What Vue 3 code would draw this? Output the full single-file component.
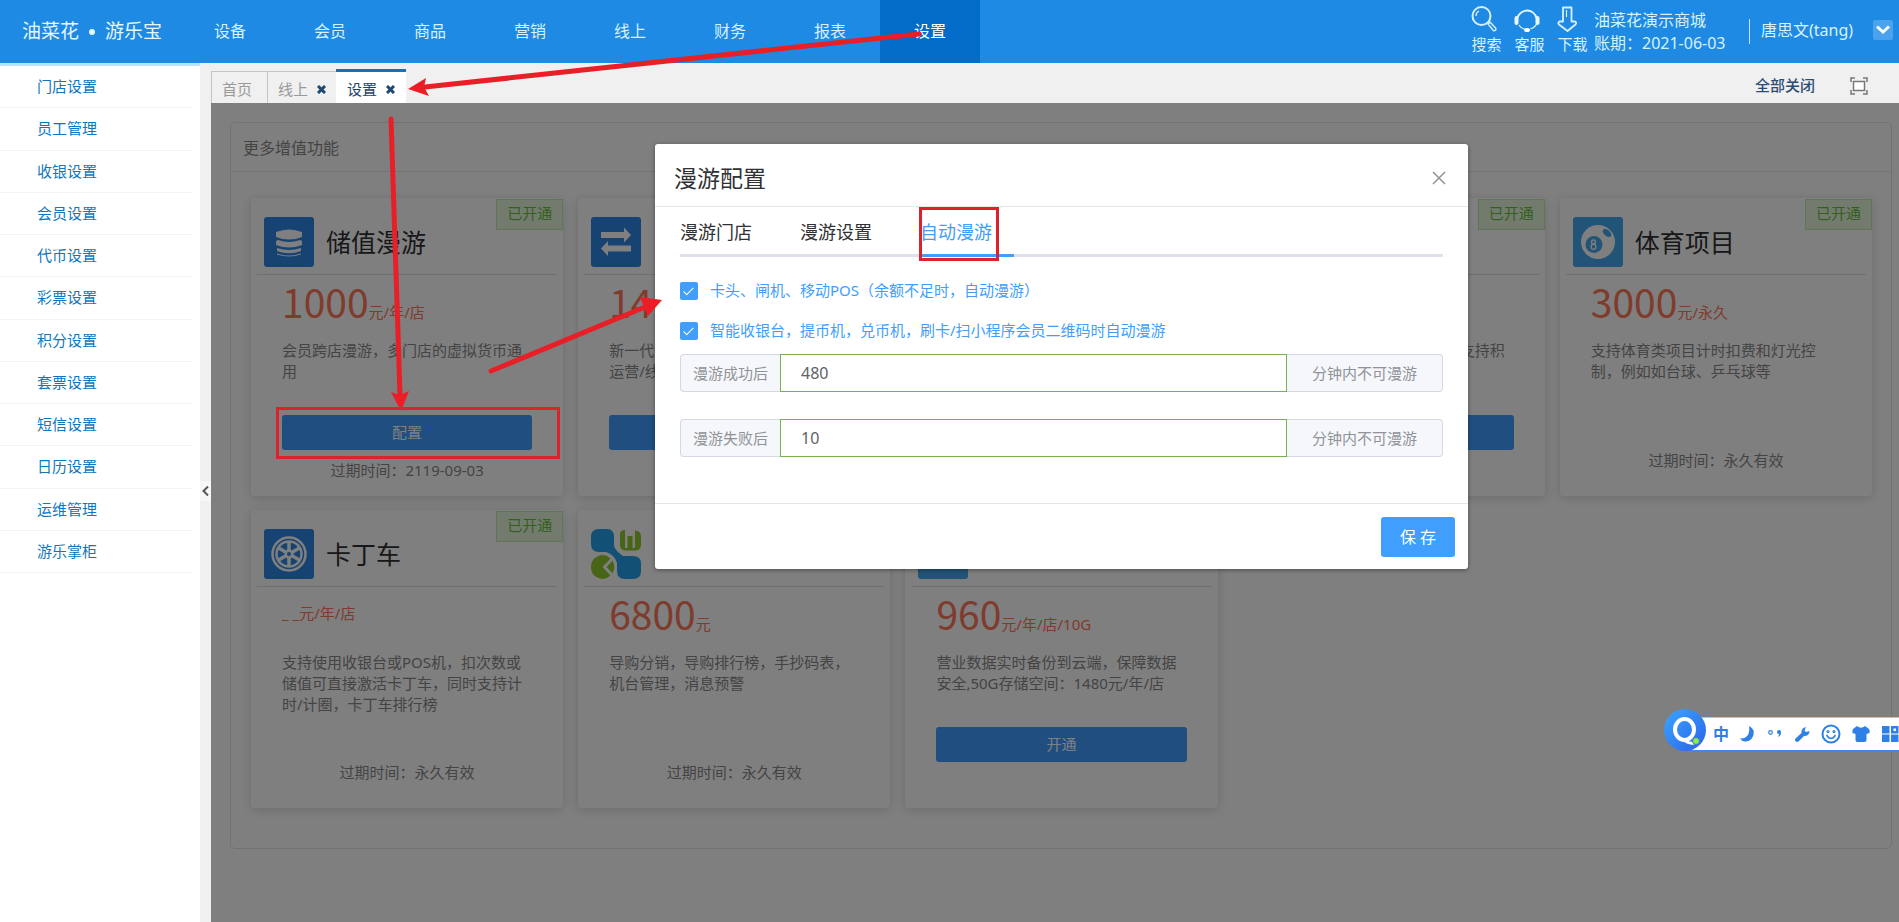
<script setup>
import { ref } from 'vue'

const navItems = ['设备', '会员', '商品', '营销', '线上', '财务', '报表', '设置']
const sideItems = [
  '门店设置', '员工管理', '收银设置', '会员设置', '代币设置', '彩票设置',
  '积分设置', '套票设置', '短信设置', '日历设置', '运维管理', '游乐掌柜'
]
const pageTabs = [
  { name: '首页', closable: false },
  { name: '线上', closable: true },
  { name: '设置', closable: true }
]
const cards = [
  { icon: 'coins', title: '储值漫游', opened: true, price: '1000', unit: '元/年/店', desc: '会员跨店漫游，多门店的虚拟货币通用', button: true, action: '配置', expire: '2119-09-03' },
  { icon: 'swap', price: '14', desc: '新一代\n运营/线', button: true },
  { icon: 'plain', button: true },
  { icon: 'plain', opened: true, desc: '支持积', descEnd: true, button: true },
  { icon: 'ball', title: '体育项目', opened: true, price: '3000', unit: '元/永久', desc: '支持体育类项目计时扣费和灯光控制，例如如台球、乒乓球等', expire: '永久有效' },
  { icon: 'wheel', title: '卡丁车', opened: true, unit: '_ _元/年/店', desc: '支持使用收银台或POS机，扣次数或储值可直接激活卡丁车，同时支持计时/计圈，卡丁车排行榜', expire: '永久有效' },
  { icon: 'clover', price: '6800', unit: '元', desc: '导购分销，导购排行榜，手抄码表，机台管理，消息预警', expire: '永久有效' },
  { icon: 'plain', price: '960', unit: '元/年/店/10G', desc: '营业数据实时备份到云端，保障数据安全,50G存储空间：1480元/年/店', button: true, action: '开通' }
]
const dialogTabs = ['漫游门店', '漫游设置', '自动漫游']
const activeTab = ref('自动漫游')
const autoDevice = ref(true)
const autoCashier = ref(true)
const afterSuccess = ref('480')
const afterFail = ref('10')
</script>

<template>
  <div class="app">
    <header class="top">
      <h1 class="logo">油菜花<i></i>游乐宝</h1>
      <nav class="nav">
        <a v-for="n in navItems" :key="n" href="#" :class="{ on: n === '设置' }">{{ n }}</a>
      </nav>
      <div class="tools">
        <button class="tool">
          <svg width="28" height="28" viewBox="0 0 28 28" fill="none" stroke="#d6f0ff" stroke-width="2">
            <circle cx="10.500" cy="11" r="9" /><path d="M5 11a5.500 5.500 0 0 1 3-5" stroke-width="1.300" />
            <path d="M17 19l2-2 5.500 6a1.600 1.600 0 0 1-2.400 2.200z" stroke-width="1.400" />
          </svg>
          搜索
        </button>
        <button class="tool">
          <svg width="28" height="28" viewBox="0 0 28 28" fill="none" stroke="#e8f7ff" stroke-width="2">
            <path d="M3.500 13a9.800 9.800 0 0 1 19 0" />
            <path d="M2.500 13v5M23.500 13v5" stroke-width="4" stroke-linecap="round" />
            <path d="M5 20q3 4.500 8 4.500M22.500 19q-1 3-6 5" stroke-width="1.200" />
            <ellipse cx="13" cy="25" rx="3" ry="2" fill="#fff" stroke="none" />
          </svg>
          客服
        </button>
        <button class="tool">
          <svg width="28" height="28" viewBox="0 0 28 28" fill="none" stroke="#d6f0ff" stroke-width="1.800" stroke-linejoin="round">
            <path d="M6 2.500h8.500v14h3.500q2 1 .5 3L10.500 26 2 19.500q-1.500-2 .5-3H6z" /><path d="M9.500 5v7" stroke-width="1.200" />
          </svg>
          下载
        </button>
      </div>
      <div class="shop">
        <span>油菜花演示商城</span>
        <span>账期：2021-06-03</span>
      </div>
      <span class="user">唐思文(tang)</span>
      <button class="drop" aria-label="展开">
        <svg width="14" height="10" viewBox="0 0 14 10" fill="none" stroke="#fff" stroke-width="3"><path d="M1 1.500l6 5.500 6-5.500" /></svg>
      </button>
    </header>

    <div class="body">
      <aside class="side">
        <nav class="menu">
          <a v-for="s in sideItems" :key="s" href="#">{{ s }}</a>
        </nav>
      </aside>
      <div class="split">
        <button aria-label="收起">
          <svg width="7" height="10" viewBox="0 0 7 10" fill="none" stroke="#555" stroke-width="2"><path d="M6 .5L1.500 5 6 9.500" /></svg>
        </button>
      </div>

      <div class="work">
        <div class="tabs">
          <div v-for="t in pageTabs" :key="t.name" class="tab" :class="{ on: t.name === '设置' }">
            <a href="#">{{ t.name }}</a>
            <button v-if="t.closable" aria-label="关闭">
              <svg width="9" height="9" viewBox="0 0 9 9" stroke="#1c4a72" stroke-width="3"><path d="M1 1l7 7M8 1L1 8" /></svg>
            </button>
          </div>
          <button class="closeall">全部关闭</button>
          <button class="full" aria-label="全屏">
            <svg width="18" height="18" viewBox="0 0 18 18" fill="none" stroke="#777" stroke-width="1.500">
              <path d="M1 5V1h4M13 1h4v4M17 13v4h-4M5 17H1v-4" /><rect x="3.500" y="4.500" width="11" height="9" fill="#fff" />
            </svg>
          </button>
        </div>

        <main class="main">
          <section class="panel">
            <h2>更多增值功能</h2>
            <div class="grid">
              <article v-for="(c, i) in cards" :key="i" class="card">
                <span v-if="c.opened" class="badge">已开通</span>
                <div class="head">
                  <svg v-if="c.icon === 'coins'" width="50" height="50" viewBox="0 0 50 50">
                    <rect width="50" height="50" rx="3" fill="#2f86e4" />
                    <g fill="#fff">
                      <path d="M12 15q13-5 26 0v5q-13 5-26 0z" /><path d="M14 23q11 4 22 0l2 1v4q-13 5-26 0v-4z" />
                      <path d="M13 31q12 4 24 0v3q-12 4.500-24 0z" /><path d="M13 36.500q12 4 24 0v1q-12 4-24 0z" />
                    </g>
                  </svg>
                  <svg v-else-if="c.icon === 'swap'" width="50" height="50" viewBox="0 0 50 50">
                    <rect width="50" height="50" rx="3" fill="#2f86e4" />
                    <path d="M10 15h23v-4.500l7 7.500-7 7.500V21H10zM40 28.500H17V24l-7 7.500 7 7.500v-4.500h23z" fill="#fff" />
                  </svg>
                  <svg v-else-if="c.icon === 'ball'" width="50" height="50" viewBox="0 0 50 50">
                    <rect width="50" height="50" rx="3" fill="#45a8ee" />
                    <circle cx="25" cy="25" r="17" fill="#fff" /><ellipse cx="34" cy="16" rx="5" ry="3" fill="#45a8ee" transform="rotate(40 34 16)" />
                    <circle cx="21" cy="27.500" r="8.500" fill="#45a8ee" />
                    <g fill="none" stroke="#fff" stroke-width="1.300"><ellipse cx="20.500" cy="25" rx="1.900" ry="2.100" /><ellipse cx="20.500" cy="29.700" rx="2.300" ry="2.600" /></g>
                  </svg>
                  <svg v-else-if="c.icon === 'wheel'" width="50" height="50" viewBox="0 0 50 50">
                    <rect width="50" height="50" rx="3" fill="#2f86e4" />
                    <g fill="none" stroke="#fff">
                      <circle cx="25" cy="25" r="16.500" stroke-width="2.500" /><circle cx="25" cy="25" r="12.500" stroke-width="2.500" />
                      <path d="M25 13v24M14.600 19l20.800 12M35.400 19L14.600 31" stroke-width="3.500" />
                    </g>
                    <circle cx="25" cy="25" r="4.500" fill="#fff" /><circle cx="25" cy="25" r="2" fill="#2f86e4" />
                  </svg>
                  <svg v-else-if="c.icon === 'clover'" width="50" height="50" viewBox="0 0 50 50">
                    <path d="M8 0h8q7 0 7 8v8q0 3 3 6t6 5h10q8 0 8 8v7q0 8-8 8h-8q-8 0-8-8v-8q-1-4-4-7t-7-4H8q-8 0-8-8V8q0-8 8-8z" fill="#24a0ea" />
                    <path d="M29 5q0-4 5-4v18h2.500V7h5v12H44V1.500q6 0 6 6v8q0 6-6 6h-9q-6 0-6-6z" fill="#90c82e" />
                    <path d="M0 38a11.500 11.500 0 0 1 19.500-8.500L11.500 38l8 8.500A11.500 11.500 0 0 1 0 38zM21.500 31.500q3.500 6.500 0 13l-6-6.500z" fill="#90c82e" />
                  </svg>
                  <svg v-else width="50" height="50" viewBox="0 0 50 50"><rect width="50" height="50" rx="3" fill="#45a8ee" /></svg>
                  <h3 v-if="c.title">{{ c.title }}</h3>
                </div>
                <p class="price"><span><b v-if="c.price">{{ c.price }}</b>{{ c.unit }}</span></p>
                <p class="desc" :class="{ end: c.descEnd }">{{ c.desc }}</p>
                <button v-if="c.button" class="act" :aria-label="c.action || '配置'">{{ c.action }}</button>
                <div v-else class="noact"></div>
                <p v-if="c.expire" class="expire">过期时间：{{ c.expire }}</p>
              </article>
            </div>
          </section>

          <div class="mask">
            <div class="dialog" role="dialog" aria-labelledby="dlg-title">
              <div class="dhead">
                <h2 id="dlg-title">漫游配置</h2>
                <button aria-label="关闭">
                  <svg width="14" height="14" viewBox="0 0 14 14" stroke="#909399" stroke-width="1.500"><path d="M1 1l12 12M13 1L1 13" /></svg>
                </button>
              </div>
              <div class="dbody">
                <div class="dtabs">
                  <button v-for="t in dialogTabs" :key="t" :class="{ on: t === activeTab }" @click="activeTab = t">{{ t }}</button>
                </div>
                <label class="check"><input v-model="autoDevice" type="checkbox" />卡头、闸机、移动POS（余额不足时，自动漫游）</label>
                <label class="check"><input v-model="autoCashier" type="checkbox" />智能收银台，提币机，兑币机，刷卡/扫小程序会员二维码时自动漫游</label>
                <div class="field">
                  <label for="ok-after">漫游成功后</label>
                  <input id="ok-after" v-model="afterSuccess" type="text" />
                  <span>分钟内不可漫游</span>
                </div>
                <div class="field">
                  <label for="fail-after">漫游失败后</label>
                  <input id="fail-after" v-model="afterFail" type="text" />
                  <span>分钟内不可漫游</span>
                </div>
              </div>
              <div class="dfoot"><button>保 存</button></div>
            </div>
          </div>
        </main>
      </div>
    </div>

    <div class="ime">
      <svg class="q" width="42" height="42" viewBox="0 0 42 42">
        <defs><linearGradient id="qg" x1="0" y1="0" x2="1" y2="1"><stop offset="0" stop-color="#3aa6ff" /><stop offset="1" stop-color="#2c62ea" /></linearGradient></defs>
        <circle cx="21" cy="21" r="21" fill="url(#qg)" />
        <ellipse cx="20.500" cy="20.500" rx="9.500" ry="10.500" fill="none" stroke="#fff" stroke-width="4" />
        <path d="M19 30q5 5 11 4" fill="none" stroke="#fff" stroke-width="3" />
        <circle cx="32" cy="32" r="3.500" fill="#8ff03a" stroke="#2c72ea" stroke-width="1" />
      </svg>
      <b>中</b>
      <svg width="16" height="16" viewBox="0 0 16 16" fill="#2f80e6"><path d="M9 0q6 3 4.500 9Q11 16 5 15.500 1.500 15 0 12.500q5 .5 7.500-3T9 0z" /></svg>
      <svg width="16" height="16" viewBox="0 0 16 16" fill="#2f80e6"><circle cx="3.500" cy="6.500" r="1.800" fill="none" stroke="#2f80e6" stroke-width="1.200" /><circle cx="12" cy="6" r="2" /><path d="M14 6q0 4-3 5l1.500-4z" /></svg>
      <svg width="16" height="16" viewBox="0 0 16 16" fill="#2f80e6"><path d="M1.500 12.500l6-5.500Q7 2 12 1l-1.500 3.500L12 6l3.500-1Q15.500 10 10 10l-5.500 5.500q-2 1-3-.5t0-2.500z" /></svg>
      <svg width="20" height="20" viewBox="0 0 20 20" fill="none" stroke="#2f80e6" stroke-width="2"><circle cx="10" cy="10" r="8.500" /><path d="M5.500 11q4.500 7 9 0" stroke-width="1.500" /><circle cx="7" cy="7.500" r=".6" /><circle cx="13" cy="7.500" r=".6" /></svg>
      <svg width="18" height="18" viewBox="0 0 18 18" fill="#2f80e6"><path d="M5 1q4 3.500 8 0l4 3q1 2 .5 4l-3 1v6q0 2-2 2h-7q-2 0-2-2V9l-3-1q-.5-2 .5-4z" /></svg>
      <svg width="18" height="18" viewBox="0 0 18 18" fill="#2f80e6"><path d="M1 1h7.500v7.500H1zM1 9.500h7.500V17H1zM10 9.500h7.500V17H10zM10 1h7.500v7.500H10z" /><rect x="12.500" y="3.500" width="2.500" height="2.500" fill="#fff" /></svg>
    </div>

    <svg class="marks" width="1899" height="922" viewBox="0 0 1899 922" fill="none" stroke="#e91f28">
      <g stroke-width="5" stroke-linecap="round">
        <path d="M919 34L425 87" /><path d="M391 119L400 395" /><path d="M491 371L645 307" />
      </g>
      <g fill="#ee1c25" stroke="none">
        <path d="M408 89L426 78l-2 9 5 9z" /><path d="M401 411L391 392l9 3 9-4z" /><path d="M662 300L640 297l4 10 4 9z" />
      </g>
      <g stroke="#dc222b" stroke-width="3">
        <rect x="920.500" y="208.500" width="77" height="51" /><rect x="277.500" y="408.500" width="281" height="49" />
      </g>
    </svg>
  </div>
</template>

<style>
html, body { margin: 0; background: #fff; }
</style>

<style scoped>
.app {
  position: relative; display: flex; flex-direction: column; min-height: 100vh; overflow: hidden;
  font-family: "Noto Sans", "Noto Sans CJK SC", sans-serif; font-size: 15px; line-height: 21px; color: #888;
}
.app *, .app *::before { box-sizing: border-box; }
a { text-decoration: none; color: inherit; }
button { font: inherit; border: 0; padding: 0; background: none; color: inherit; cursor: pointer; }
h1, h2, h3, p { margin: 0; font-weight: 400; }
svg { display: block; flex: none; }

.top { display: flex; align-items: center; height: 63px; background: #1e8ae3; color: #d8f1ff; font-size: 16px; }
.logo { display: flex; align-items: center; width: 180px; padding-left: 22px; font-size: 19px; color: #e6f6ff; }
.logo i { width: 6px; height: 6px; border-radius: 3px; background: #e6f6ff; margin: 0 10px; }
.nav { display: flex; align-self: stretch; }
.nav a { width: 100px; line-height: 63px; text-align: center; }
.nav a.on { background: #036bc8; color: #fff; }
.tools { display: flex; gap: 12px; margin-left: auto; font-size: 15px; }
.tool { display: flex; flex-direction: column; gap: 1px; width: 31px; padding-bottom: 3px; white-space: nowrap; }
.shop { display: flex; flex-direction: column; margin-left: 6px; width: 155px; line-height: 23px; white-space: nowrap; }
.user { padding: 1px 0 3px 11px; width: 124px; border-left: 1px solid #c8e8ff; white-space: nowrap; }
.drop { display: flex; align-items: center; justify-content: center; width: 20px; height: 20px; margin: 0 6px 4px 0; background: #4ba3ee; border-radius: 2px; }

.body { display: flex; flex: 1; }
.side { width: 200px; border-top: 3px solid #b9e4fd; background: #fff; border-bottom: 1px solid #e8e8e8; }
.menu { display: grid; grid-auto-rows: 1fr; height: 507px; margin-right: 9px; }
.menu a { display: flex; align-items: center; padding-left: 37px; border-bottom: 1px solid #f3f3f3; color: #0d78c0; }
.split { display: flex; align-items: center; width: 11px; padding-bottom: 4px; background: #f0f0f0; }
.split button { display: flex; align-items: center; justify-content: center; width: 11px; height: 20px; background: #f7f7f7; }

.work { flex: 1; min-width: 0; display: flex; flex-direction: column; }
.tabs { display: flex; align-items: flex-end; height: 40px; background: #f0f0f0; }
.tab { display: flex; align-items: center; gap: 9px; height: 32px; padding: 4px 10px 0; border: 1px solid #c4c4c4; border-bottom: 0; border-right: 0; color: #999; }
.tab:first-child { padding-right: 15px; }
.tab.on { height: 34px; padding: 3px 11px 0; border: 0; border-top: 3px solid #0f72c4; background: #fff; color: #1f4467; }
.closeall { align-self: center; margin-left: auto; margin-right: 35px; padding-top: 4px; font-weight: 500; color: #2d4d70; }
.full { align-self: center; margin-right: 31px; padding-top: 5px; }

.main { position: relative; flex: 1; border-bottom: 1px solid #e8e8e8; padding: 19px 7px 73px 19px; background: #fff; }
.panel { border: 1px solid #e2e4e8; border-radius: 5px; }
.panel h2 { padding: 15px 12px 12px; border-bottom: 1px solid #e6e8ec; font-size: 16px; }
.grid { display: grid; grid-template-columns: repeat(5, 1fr); gap: 14px 15px; padding: 26px 19px 40px 20px; }
.card { position: relative; display: flex; flex-direction: column; height: 298px; border-radius: 4px; background: #fff; box-shadow: 0 2px 12px rgba(0, 0, 0, .16); }
.badge { position: absolute; top: 1px; right: 0; padding: 3px 10px 5px; border: 1px solid #c2e7b0; background: #e7f6df; color: #67c23a; }
.head { display: flex; gap: 12px; margin: 0 6px; padding: 19px 7px 7px; border-bottom: 1px solid #dcdfe6; }
.head h3 { padding-top: 7px; font-size: 25px; line-height: 36px; color: #303133; }
.price { display: flex; align-items: center; height: 52px; padding-left: 31px; margin-bottom: 13px; color: #ff7658; white-space: nowrap; }
.price b { font-family: "Noto Sans CJK SC", sans-serif; font-size: 39px; line-height: 52px; font-weight: 400; }
.desc { height: 63px; margin: 0 40px 12px 31px; white-space: pre-line; }
.desc.end { text-align: right; }
.act { flex: none; height: 35px; margin: 0 31px 10px; border-radius: 3px; background: #409eff; color: #fff; }
.noact { height: 35px; }
.expire { text-align: center; }

.mask { position: absolute; inset: 0; display: flex; justify-content: center; align-items: flex-start; padding: 41px 0 0 13px; background: rgba(0, 0, 0, .5); }
.dialog { width: 813px; background: #fff; border-radius: 3px; box-shadow: 0 1px 4px rgba(0, 0, 0, .4); color: #303133; }
.dhead { display: flex; justify-content: space-between; align-items: center; height: 63px; padding: 6px 22px 0 19px; border-bottom: 1px solid #e6e6e6; }
.dhead h2 { font-size: 23px; line-height: 32px; }
.dbody { padding: 3px 25px 46px; }
.dtabs { display: flex; gap: 26px; margin-bottom: 23px; border-bottom: 3px solid #dfe2ea; }
.dtabs button { width: 94px; height: 47px; margin-bottom: -3px; border-bottom: 3px solid transparent; text-align: left; font-size: 18px; }
.dtabs button.on { color: #409eff; border-color: #409eff; }
.check { display: flex; align-items: center; gap: 12px; height: 21px; margin-bottom: 19px; color: #409eff; }
.check input { appearance: none; width: 18px; height: 18px; margin: 0; border-radius: 2px; background: #409eff; position: relative; }
.check input:checked::before { content: ""; position: absolute; left: 6px; top: 3px; width: 5px; height: 10px; border: solid #fff; border-width: 0 1px 1px 0; transform: rotate(45deg); }
.check + .field { margin-top: -6px; }
.field { display: flex; height: 38px; margin-bottom: 27px; }
.field:last-child { margin-bottom: 0; }
.field label, .field span { display: flex; align-items: center; justify-content: center; border: 1px solid #d4d8e0; background: #f5f7fa; color: #909399; }
.field label { width: 100px; border-right: 0; border-radius: 4px 0 0 4px; }
.field span { width: 156px; border-left: 0; border-radius: 0 4px 4px 0; }
.field input { flex: 1; min-width: 0; border: 1px solid #76b052; padding: 0 20px; font: inherit; font-size: 16px; color: #606266; background: #fff; outline: 0; }
.dfoot { display: flex; justify-content: flex-end; padding: 13px 13px 12px; border-top: 1px solid #e6e6e6; }
.dfoot button { width: 74px; height: 40px; border-radius: 3px; background: #409eff; color: #fff; font-size: 16px; }

.ime { position: absolute; right: 0; top: 717px; display: flex; align-items: center; gap: 11px; height: 35px; padding-left: 23px; background: #fff; border-top: 1px solid #9bcbff; border-bottom: 2px solid #3f8ae0; color: #2f80e6; }
.ime .q { position: absolute; left: -26px; top: -9px; }
.ime b { font-size: 16px; }
.marks { position: absolute; left: 0; top: 0; pointer-events: none; }
</style>
